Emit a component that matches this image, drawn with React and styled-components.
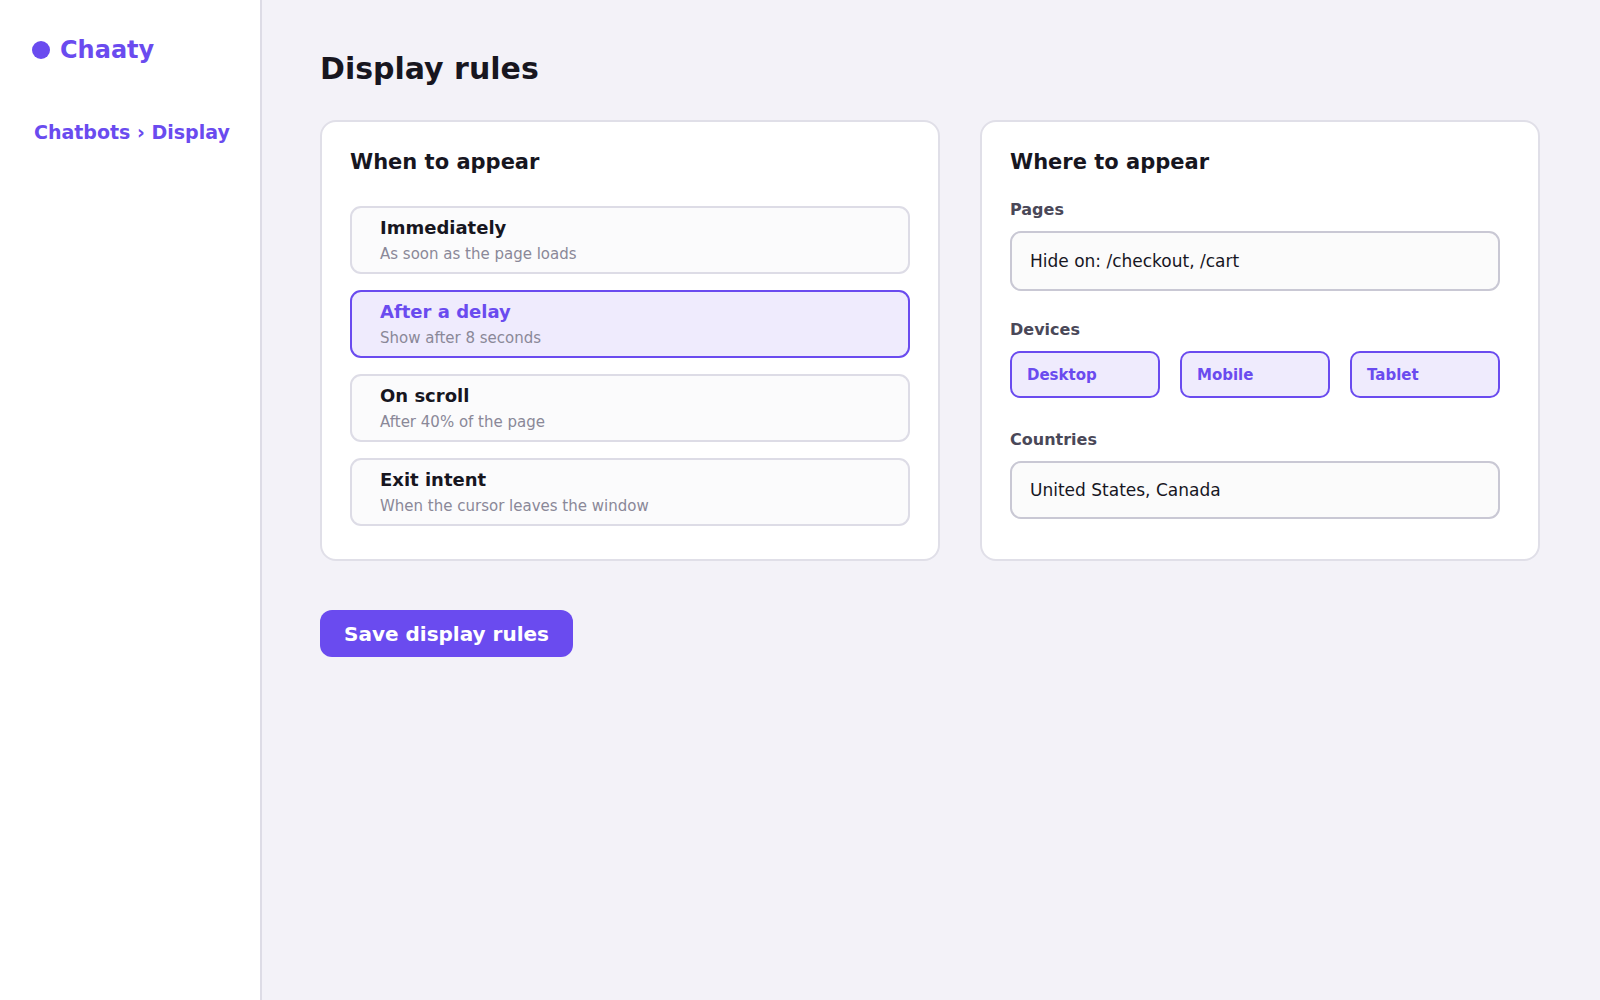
import styled, { createGlobalStyle } from "styled-components"
import { useState } from "react"

const GlobalStyle = createGlobalStyle`
* { box-sizing: border-box; }
body {
    margin: 0;
    font-family: 'DejaVu Sans', 'Noto Sans', sans-serif;
    background: #f3f2f8;
    color: #17161f;
}
`

const triggers = [
    { id: "now", title: "Immediately", hint: "As soon as the page loads" },
    { id: "delay", title: "After a delay", hint: "Show after 8 seconds" },
    { id: "scroll", title: "On scroll", hint: "After 40% of the page" },
    { id: "exit", title: "Exit intent", hint: "When the cursor leaves the window" },
]

const devices = ["Desktop", "Mobile", "Tablet"]

function App() {

    const [trigger, setTrigger] = useState("delay")
    const [pages, setPages] = useState("Hide on: /checkout, /cart")
    const [countries, setCountries] = useState("United States, Canada")
    const [selectedDevices, setSelectedDevices] = useState(devices)

    function toggleDevice(name){
        setSelectedDevices(selectedDevices.includes(name)
            ? selectedDevices.filter((d) => d !== name)
            : [...selectedDevices, name])
    }

    return (
        <Layout>
            <GlobalStyle />
            <Sidebar>
                <Brand>
                    <BrandDot />
                    Chaaty
                </Brand>
                <Crumbs>Chatbots › Display</Crumbs>
            </Sidebar>

            <Main>
                <Title>Display rules</Title>
                <Columns>
                    <Card>
                        <CardTitle>When to appear</CardTitle>
                        <OptionList>
                            {triggers.map((t) => (
                                <Option key={t.id} $active={trigger === t.id} onClick={() => setTrigger(t.id)}>
                                    <OptionTitle $active={trigger === t.id}>{t.title}</OptionTitle>
                                    <OptionHint>{t.hint}</OptionHint>
                                </Option>
                            ))}
                        </OptionList>
                    </Card>

                    <Card $narrow>
                        <CardTitle>Where to appear</CardTitle>

                        <Field $top={26}>
                            <Label>Pages</Label>
                            <Input $height={60} value={pages} onChange={(e)=>setPages(e.target.value)} />
                        </Field>

                        <Field $top={29}>
                            <Label>Devices</Label>
                            <Chips>
                                {devices.map((d) => (
                                    <Chip key={d} $on={selectedDevices.includes(d)} onClick={() => toggleDevice(d)}>{d}</Chip>
                                ))}
                            </Chips>
                        </Field>

                        <Field $top={32}>
                            <Label>Countries</Label>
                            <Input $height={58} value={countries} onChange={(e)=>setCountries(e.target.value)} />
                        </Field>
                    </Card>
                </Columns>

                <SaveButton type="button">Save display rules</SaveButton>
            </Main>
        </Layout>
    )
}

const Layout = styled.div`
display: flex;
min-height: 100vh;
`

const Sidebar = styled.aside`
width: 262px;
flex-shrink: 0;
background: #ffffff;
border-right: 2px solid #dddce6;
padding: 33px 32px;
`

const Brand = styled.div`
display: flex;
align-items: center;
gap: 10px;
font-size: 24px;
line-height: 34px;
font-weight: 700;
color: #6a4bef;
`

const BrandDot = styled.span`
width: 18px;
height: 18px;
border-radius: 50%;
background: #6a4bef;
`

const Crumbs = styled.div`
margin-top: 46px;
padding: 8px 2px;
font-size: 19px;
line-height: 22px;
font-weight: 700;
white-space: nowrap;
color: #6a4bef;
`

const Main = styled.main`
flex: 1;
padding: 49px 60px 48px 58px;
`

const Title = styled.h1`
margin: 0 0 31px;
font-size: 30px;
line-height: 40px;
font-weight: 700;
color: #17161f;
`

const Columns = styled.div`
display: grid;
grid-template-columns: minmax(0, 31fr) minmax(0, 28fr);
gap: 40px;
`

const Card = styled.section`
background: #ffffff;
border: 2px solid #e0dfe8;
border-radius: 16px;
padding: ${(p) => p.$narrow ? "28px 38px 33px 28px" : "28px 28px 33px"};
`

const CardTitle = styled.h2`
margin: 0;
font-size: 21px;
line-height: 24px;
font-weight: 700;
color: #17161f;
`

const OptionList = styled.div`
margin-top: 32px;
display: flex;
flex-direction: column;
gap: 16px;
`

const Option = styled.div`
height: 68px;
display: flex;
flex-direction: column;
justify-content: center;
gap: 5px;
padding: 0 28px;
border-radius: 11px;
border: 2px solid ${(p) => p.$active ? "#6a4bef" : "#dddce6"};
background: ${(p) => p.$active ? "#efebfd" : "#fbfbfc"};
cursor: pointer;
`

const OptionTitle = styled.div`
font-size: 18px;
line-height: 22px;
font-weight: 700;
color: ${(p) => p.$active ? "#6a4bef" : "#17161f"};
`

const OptionHint = styled.div`
font-size: 15px;
line-height: 20px;
color: #8a8898;
`

const Field = styled.div`
margin-top: ${(p) => p.$top}px;
display: flex;
flex-direction: column;
gap: 12px;
`

const Label = styled.label`
font-size: 16px;
line-height: 19px;
font-weight: 700;
color: #4a4858;
`

const Input = styled.input`
width: 100%;
height: ${(p) => p.$height}px;
padding: 0 18px;
border: 2px solid #c9c8d4;
border-radius: 11px;
background: #fbfbfb;
font-family: inherit;
font-size: 17px;
color: #17161f;
outline: none;
`

const Chips = styled.div`
display: grid;
grid-template-columns: repeat(3, 1fr);
gap: 20px;
`

const Chip = styled.button`
height: 47px;
padding: 0 15px;
text-align: left;
border-radius: 10px;
border: 2px solid ${(p) => p.$on ? "#6a4bef" : "#c9c8d4"};
background: ${(p) => p.$on ? "#efebfd" : "#fbfbfb"};
font-family: inherit;
font-size: 15px;
font-weight: 700;
color: ${(p) => p.$on ? "#6a4bef" : "#4a4858"};
cursor: pointer;
`

const SaveButton = styled.button`
margin-top: 49px;
height: 47px;
padding: 0 24px;
border: none;
border-radius: 12px;
background: #6a4bef;
color: #ffffff;
font-family: inherit;
font-size: 20px;
font-weight: 700;
cursor: pointer;
`

export default App
